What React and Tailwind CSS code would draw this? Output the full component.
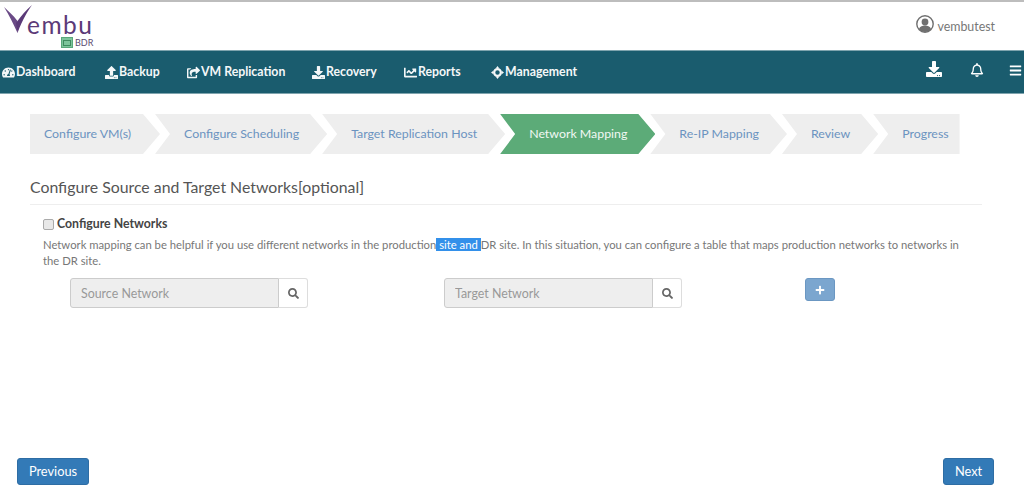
import React from 'react';
import { FaTachometerAlt, FaUpload, FaShareSquare, FaDownload, FaChartLine, FaBars, FaSearch, FaPlus, FaRegBell } from 'react-icons/fa';

const TargetIcon = ({ className }) => (
  <svg viewBox="0 0 14 14" width="13" height="13" className={className}>
    <circle cx="7" cy="7" r="3.6" fill="none" stroke="currentColor" strokeWidth="2.4" />
    <path d="M7 0 L8.8 2.5 L5.2 2.5 Z M7 14 L8.8 11.5 L5.2 11.5 Z M0 7 L2.5 5.2 L2.5 8.8 Z M14 7 L11.5 5.2 L11.5 8.8 Z" fill="currentColor" />
  </svg>
);

const navItems = [
  { label: 'Dashboard', icon: FaTachometerAlt, width: 'w-[103px]' },
  { label: 'Backup', icon: FaUpload, width: 'w-[82px]' },
  { label: 'VM Replication', icon: FaShareSquare, width: 'w-[125px]' },
  { label: 'Recovery', icon: FaDownload, width: 'w-[92px]' },
  { label: 'Reports', icon: FaChartLine, width: 'w-[87px]' },
  { label: 'Management', icon: TargetIcon, width: 'w-[100px]' },
];

const arrow = '[clip-path:polygon(0_0,calc(100%-17px)_0,100%_50%,calc(100%-17px)_100%,0_100%,15px_50%)]';

const steps = [
  { label: 'Configure VM(s)', cls: `pl-[14px] pr-[29px] [clip-path:polygon(0_0,calc(100%-17px)_0,100%_50%,calc(100%-17px)_100%,0_100%)] bg-[#eeeeee] text-[#6b93c0]` },
  { label: 'Configure Scheduling', cls: `pl-[29px] pr-[28px] bg-[#eeeeee] text-[#6b93c0] ${arrow}` },
  { label: 'Target Replication Host', cls: `pl-[29px] pr-[28px] bg-[#eeeeee] text-[#6b93c0] ${arrow}` },
  { label: 'Network Mapping', cls: `pl-[29px] pr-[28px] bg-[#5cab78] text-[#f2f8f4] ${arrow}` },
  { label: 'Re-IP Mapping', cls: `pl-[29px] pr-[28px] bg-[#eeeeee] text-[#6b93c0] ${arrow}` },
  { label: 'Review', cls: `pl-[29px] pr-[28px] bg-[#eeeeee] text-[#6b93c0] ${arrow}` },
  { label: 'Progress', cls: 'pl-[29px] pr-[11px] bg-[#eeeeee] text-[#6b93c0] [clip-path:polygon(0_0,100%_0,100%_100%,0_100%,15px_50%)]' },
];

const SearchBox = ({ placeholder, className }) => (
  <div className={`flex h-[30px] ${className}`}>
    <input
      disabled
      placeholder={placeholder}
      className="w-[209px] h-full px-[10px] text-[12.4px] bg-[#eeeeee] border border-[#cccccc] rounded-l-[3px] placeholder:text-[#999999]"
    />
    <div className="w-[29px] h-full flex items-center justify-center bg-white border border-l-0 border-[#dddddd] rounded-r-[3px] text-[#666666]">
      <FaSearch className="text-[11px]" />
    </div>
  </div>
);

export default function App() {
  return (
    <div className="w-[1024px] h-[485px] overflow-hidden bg-white flex flex-col font-['Lato',sans-serif]">
      <header className="h-[50px] shrink-0 border-t-2 border-[#bdbdbd] flex justify-between">
        <div className="relative w-[110px] h-full">
          <svg width="34" height="32" viewBox="0 0 34 32" className="absolute left-0 top-0">
            <path d="M4 5 C8 9 13 13 17.5 19 L17.5 31 C14 23 9 13 4 5 Z" fill="#6a4a86" />
            <path d="M16 21 C21 14 26 8 32 3 C28 9 23 16 17.5 31 Z" fill="#5b3a78" />
          </svg>
          <span className="absolute left-[27px] top-[12px] text-[24.5px] leading-[22px] tracking-[1.5px] text-[#5b3a78]">embu</span>
          <span className="absolute left-[61px] top-[35px] w-[12px] h-[11px] bg-[#7cc49a] border border-[#5aa87a] flex items-center justify-center">
            <span className="block w-[8px] h-[6px] border border-[#3f8a5e]" />
          </span>
          <span className="absolute left-[75px] top-[35px] text-[9px] leading-[11px] text-[#5b4a70]">BDR</span>
        </div>
        <div className="flex items-start pr-[29px]">
          <svg width="18" height="18" viewBox="0 0 18 18" className="mt-[13px] mr-[3px]">
            <circle cx="9" cy="9" r="8.2" fill="#ffffff" stroke="#6f6f6f" strokeWidth="1.4" />
            <circle cx="9" cy="7" r="3.4" fill="#6f6f6f" />
            <path d="M2.8 14.2 C4 11.4 6.5 10.6 9 10.6 C11.5 10.6 14 11.4 15.2 14.2 C13.6 16 11.4 17 9 17 C6.6 17 4.4 16 2.8 14.2 Z" fill="#6f6f6f" />
          </svg>
          <span className="text-[12.4px] leading-[16px] text-[#777777] mt-[17px]">vembutest</span>
        </div>
      </header>

      <nav className="h-[44px] shrink-0 bg-[#1a5c6e] text-[#f4f7f8] flex items-center justify-between border-y border-[#7fa4ae] pl-[2px]">
        <div className="flex items-center pt-[1px]">
          {navItems.map(({ label, icon: Icon, width }) => (
            <div key={label} className={`flex items-center gap-[1px] text-[12.3px] font-bold ${width}`}>
              <Icon className="text-[13px]" />
              <span>{label}</span>
            </div>
          ))}
        </div>
        <div className="flex items-center text-white">
          <FaDownload className="text-[16px] mr-[28px] mb-[6px]" />
          <FaRegBell className="text-[14px] mr-[25px] mb-[4px]" />
          <FaBars className="text-[13px] mr-[2px] mb-[4px]" />
        </div>
      </nav>

      <main className="flex-1 flex flex-col pl-[30px] pr-[42px]">
        <div className="flex mt-[20px] h-[40px]">
          {steps.map((step, i) => (
            <div
              key={step.label}
              className={`h-full flex items-center text-[12.35px] whitespace-nowrap ${i > 0 ? '-ml-[5px]' : ''} ${step.cls}`}
            >
              {step.label}
            </div>
          ))}
        </div>

        <h2 className="mt-[23px] text-[15.85px] leading-[20px] text-[#555555]">Configure Source and Target Networks[optional]</h2>
        <div className="mt-[7px] border-t border-[#eeeeee]" />

        <div className="pl-[13px]">
          <label className="flex items-center mt-[12px] h-[14px]">
            <input type="checkbox" className="w-[11px] h-[11px] mr-[3px] appearance-none bg-[#e8e8e8] border border-[#aaaaaa] rounded-[2px]" />
            <span className="text-[12.3px] font-bold text-[#444444]">Configure Networks</span>
          </label>
          <p className="mt-[6px] w-[925px] text-[11.28px] leading-[16px] text-[#777777]">
            Network mapping can be helpful if you use different networks in the production<span className="bg-[#3390ea] text-white"> site and </span>DR site. In this situation, you can configure a table that maps production networks to networks in the DR site.
          </p>
          <div className="flex mt-[9px] pl-[27px] items-start">
            <SearchBox placeholder="Source Network" />
            <SearchBox placeholder="Target Network" className="ml-[136px]" />
            <button className="ml-[123px] w-[30px] h-[23px] flex items-center justify-center bg-[#7ba6cf] border border-[#6b97c2] rounded-[3px] text-white">
              <FaPlus className="text-[10px]" />
            </button>
          </div>
        </div>

        <div className="mt-auto -ml-[13px] -mr-[12px] flex justify-between">
          <button className="w-[72px] h-[27px] bg-[#337ab7] border border-[#2e6da4] rounded-[3px] text-[12.8px] text-white">Previous</button>
          <button className="w-[51px] h-[27px] bg-[#337ab7] border border-[#2e6da4] rounded-[3px] text-[12.8px] text-white">Next</button>
        </div>
      </main>
    </div>
  );
}
